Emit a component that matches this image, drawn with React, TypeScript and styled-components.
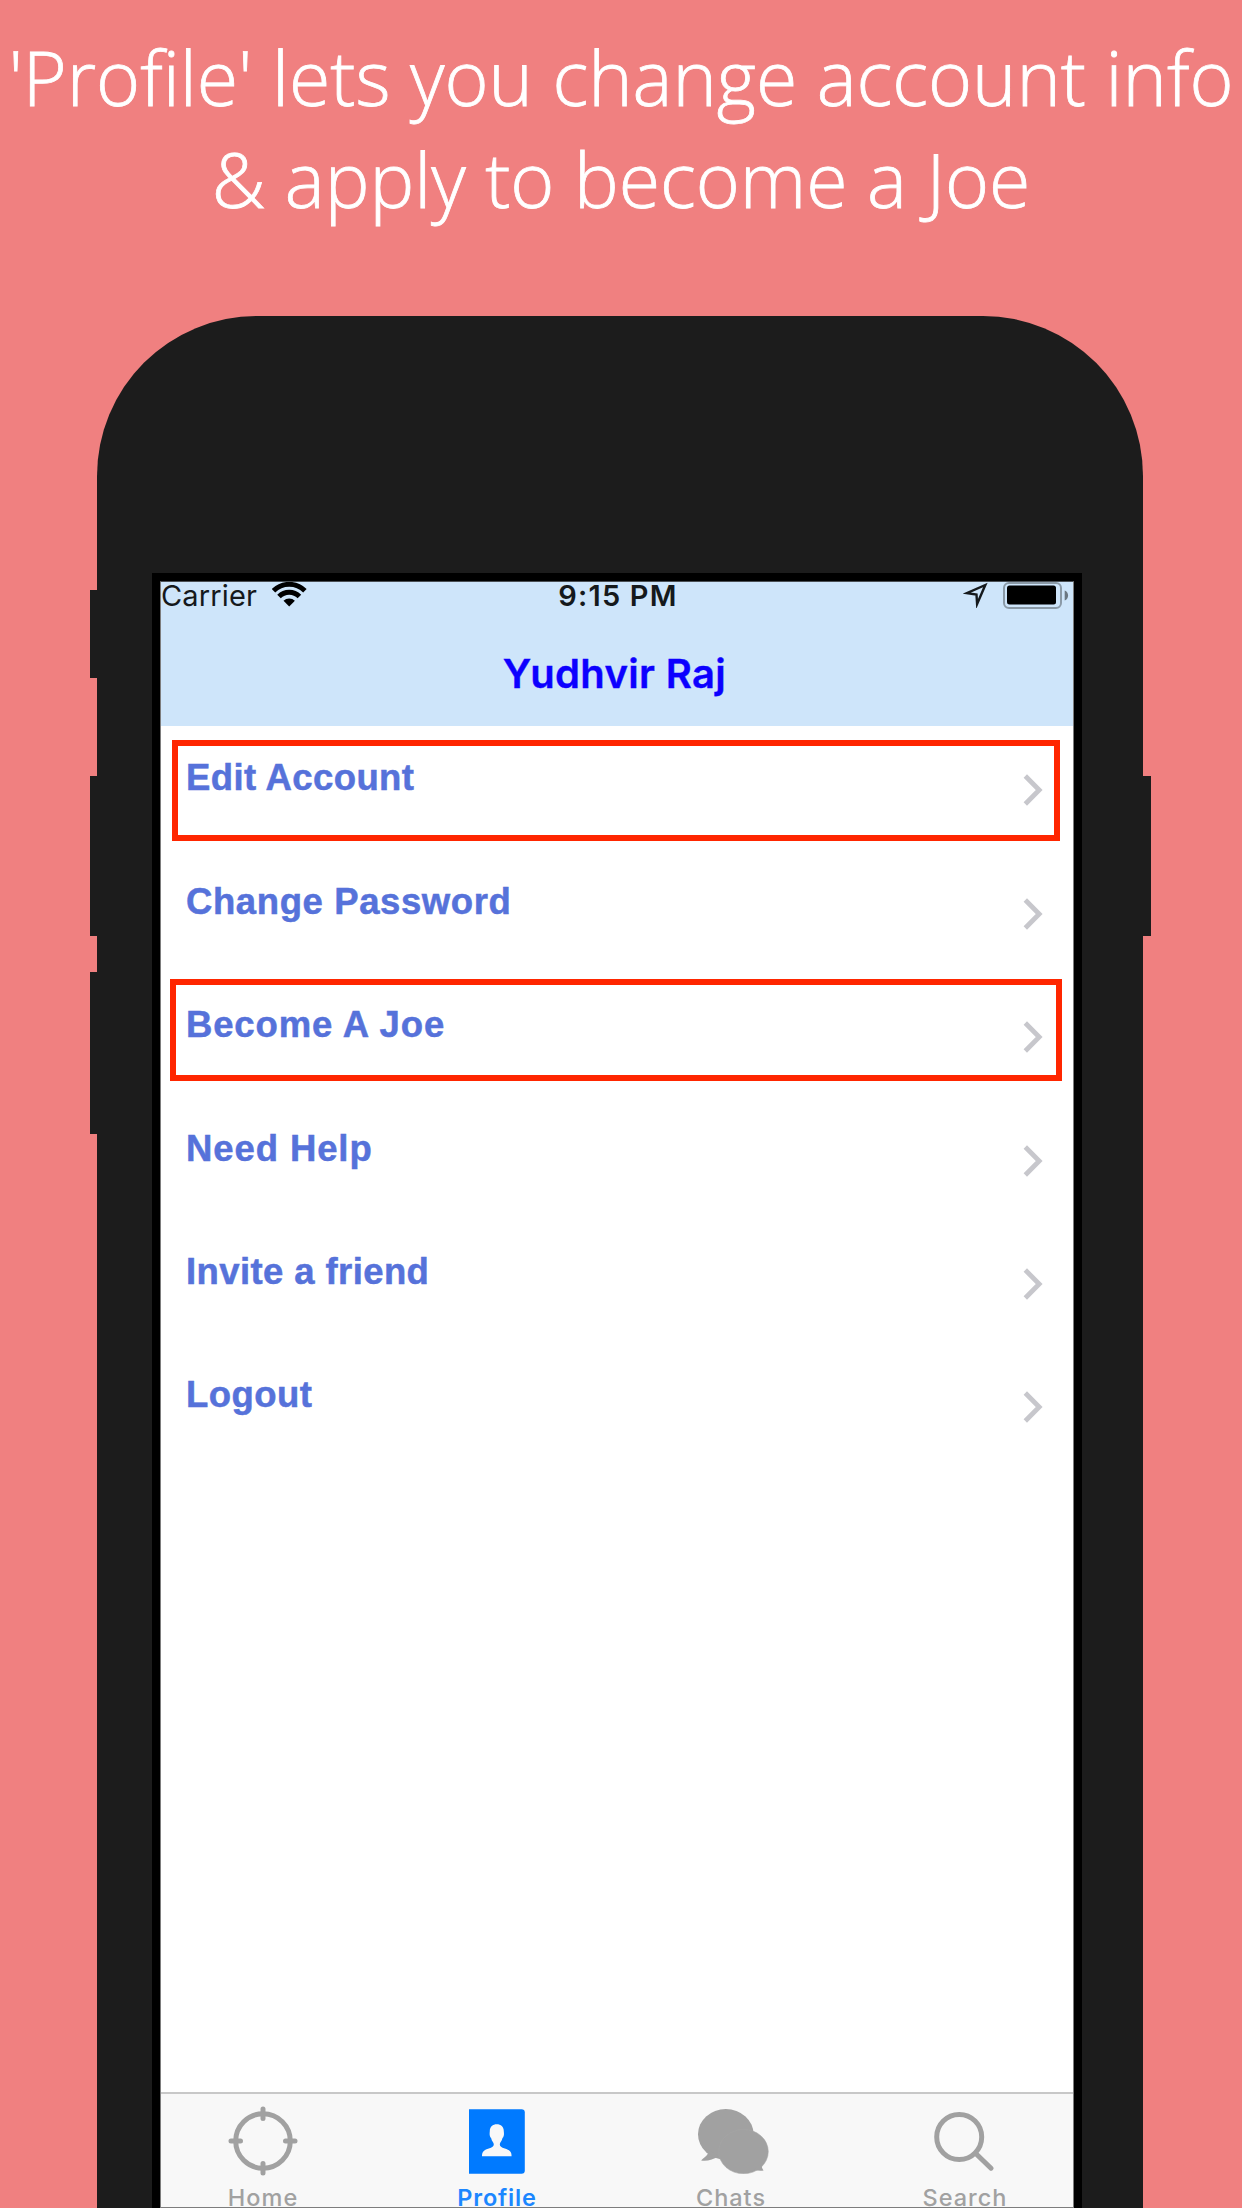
import React from "react";
import styled, { createGlobalStyle } from "styled-components";

const GlobalStyle = createGlobalStyle`
  * { box-sizing: border-box; }
  body {
    margin: 0;
    background: #f08080;
    font-family: Inter, "Liberation Sans", sans-serif;
  }
`;

const Page = styled.main`
  width: 1242px;
  height: 2208px;
  overflow: hidden;
  display: flex;
  flex-direction: column;
  background: #f08080;
`;

const Headline = styled.h1`
  margin: 0;
  padding-top: 26px;
  height: 316px;
  flex: none;
  color: #fff;
  font: 300 75.2px/102px "Open Sans", sans-serif;
  -webkit-text-stroke: 0.8px #fff;
  text-align: center;
  white-space: nowrap;
`;

const Phone = styled.section`
  position: relative;
  flex: 1;
  width: 1046px;
  margin-left: 97px;
  padding: 257px 61px 0 55px;
  display: flex;
  background: #1c1c1c;
  border-radius: 160px 160px 0 0;
`;

const SideButton = styled.span<{ $side: "left" | "right"; $top: number; $height: number }>`
  position: absolute;
  ${({ $side }) => ($side === "left" ? "left: -7px;" : "right: -8px;")}
  top: ${({ $top }) => $top}px;
  width: 12px;
  height: ${({ $height }) => $height}px;
  background: #1c1c1c;
`;

const Bezel = styled.div`
  flex: 1;
  display: flex;
  padding: 8px 8px 0;
  background: #000;
`;

const Screen = styled.div`
  flex: 1;
  display: flex;
  flex-direction: column;
  overflow: hidden;
  border: 1px solid #7d7d7d;
  border-top-color: #4a4f54;
  background: #fff;
`;

const TopArea = styled.header`
  flex: none;
  height: 144px;
  background: #cee5fa;
`;

const StatusBar = styled.div`
  height: 26px;
  display: grid;
  grid-template-columns: 1fr auto 1fr;
  color: #15191c;
  font-size: 29px;
  line-height: 28px;
  white-space: nowrap;
`;

const Carrier = styled.div`
  display: flex;
  gap: 15px;
  letter-spacing: 0.15px;
`;

const Clock = styled.time`
  padding-left: 2px;
  font-weight: 600;
  letter-spacing: 1.2px;
`;

const Indicators = styled.div`
  display: flex;
  justify-content: flex-end;
  gap: 15px;
  padding-right: 4px;
`;

const ScreenTitle = styled.h2`
  margin: 0;
  padding: 13px 5px 0 0;
  color: #0c00ff;
  font-size: 40px;
  font-weight: 600;
  line-height: 105px;
  letter-spacing: 0.35px;
  -webkit-text-stroke: 0.4px #0c00ff;
  text-align: center;
`;

const Menu = styled.ul`
  flex: 1;
  margin: 0;
  padding: 2.8px 0 0;
  list-style: none;
`;

const MenuRow = styled.li`
  position: relative;
  height: 123.36px;
  padding: 0 30.5px 0 25px;
  display: flex;
  align-items: center;
  justify-content: space-between;
`;

const MenuLabel = styled.span<{ $tracking: number }>`
  padding-bottom: 24px;
  color: #5672da;
  font: bold 36.5px/42px "Liberation Sans", Arial, sans-serif;
  letter-spacing: ${({ $tracking }) => $tracking}px;
  -webkit-text-stroke: 0.5px #5672da;
`;

const Highlight = styled.span<{ $top: number; $left: number; $right: number; $height: number }>`
  position: absolute;
  top: ${({ $top }) => $top}px;
  left: ${({ $left }) => $left}px;
  right: ${({ $right }) => $right}px;
  height: ${({ $height }) => $height}px;
  border: 6px solid #ff2600;
`;

const TabBar = styled.nav`
  flex: none;
  height: 115px;
  padding: 12px 48px 0 42px;
  display: flex;
  justify-content: space-between;
  border-top: 2px solid #c8c8c8;
  background: #f8f8f8;
`;

const Tab = styled.div<{ $active?: boolean }>`
  width: 120px;
  flex: none;
  display: flex;
  flex-direction: column;
  align-items: center;
  color: ${({ $active }) => ($active ? "#007aff" : "#a1a1a1")};
`;

const TabIcon = styled.div<{ $shift?: number }>`
  flex: none;
  height: 70px;
  display: flex;
  align-items: center;
  margin-left: ${({ $shift = 0 }) => $shift}px;
`;

const TabLabel = styled.span<{ $active?: boolean }>`
  margin-top: 10px;
  font-size: 23.5px;
  font-weight: ${({ $active }) => ($active ? 600 : 500)};
  line-height: 24px;
  letter-spacing: ${({ $active }) => ($active ? 0.8 : 1)}px;
  color: ${({ $active }) => ($active ? "#1c87ff" : "#a1a1a1")};
`;

const WifiIcon = () => (
  <svg width="35" height="25" viewBox="0 0 35 25" fill="none" stroke="#000">
    <path d="M1.5 8.8a22.2 22.2 0 0 1 31.4 0" strokeWidth="4.9" />
    <path d="M7 14.4a14.4 14.4 0 0 1 20.4 0" strokeWidth="5" />
    <path d="M11.5 18.8a8.1 8.1 0 0 1 11.4 0L17.2 24.6z" fill="#000" stroke="none" />
  </svg>
);

const LocationIcon = () => (
  <svg width="25" height="26" viewBox="0 0 25 26" fill="none">
    <path
      d="M22.3 3 3.8 11.2l9.7 1.4.6 9.4z"
      stroke="#15191c"
      strokeWidth="2.4"
      strokeMiterlimit="5"
    />
  </svg>
);

const BatteryIcon = () => (
  <svg width="66" height="27" viewBox="0 0 66 27">
    <rect x="1" y="1" width="57" height="25" rx="5" fill="none" stroke="#8b9aa7" strokeWidth="2" />
    <rect x="4" y="3.6" width="49" height="19" rx="2.5" fill="#000" />
    <path d="M61.7 8.5c4.5 1.5 4.5 8.5 0 10z" fill="#6b7782" />
  </svg>
);

const Chevron = () => (
  <svg width="20" height="34" viewBox="0 0 20 34" fill="none">
    <path d="M2.3 3 16.2 17 2.3 31" stroke="#c7c7cc" strokeWidth="4.8" />
  </svg>
);

const HomeIcon = () => (
  <svg width="70" height="70" viewBox="0 0 70 70" fill="none" stroke="currentColor" strokeWidth="5">
    <circle cx="35" cy="35" r="27.3" />
    <path d="M35 3v9.5M35 57.5V67M3 35h9.5M57.5 35H67" strokeLinecap="round" />
  </svg>
);

const ProfileIcon = () => (
  <svg width="56" height="65" viewBox="0 0 56 65">
    <path d="M0 .2h52.5q3.3 0 3.3 3.3v58q0 3.3-3.3 3.3H0z" fill="currentColor" />
    <path
      d="M13 47.2c0-4.8 2.5-6.2 6.8-7.6 3.4-1.1 5-2.2 5-4.3 0-1.6-2-3-2.7-6.3-1.7-1.6-1.6-4.2-1.3-6.8 0-4.3 3-6.9 7-6.9s7 2.6 7 6.9c.3 2.6.4 5.2-1.3 6.8-.7 3.3-2.7 4.7-2.7 6.3 0 2.1 1.6 3.2 5 4.3 4.3 1.4 6.8 2.8 6.8 7.6z"
      fill="#f8f8f8"
    />
  </svg>
);

const ChatsIcon = () => (
  <svg width="71" height="65" viewBox="0 0 71 65" fill="currentColor">
    <ellipse cx="27.8" cy="25.3" rx="27.8" ry="25.3" />
    <path d="M8 39.5c3 2.5 2.5 4.5.8 6.8-1.5 2-3.8 3-5.7 5.2 6 1.2 11.5-1 18.500-4.500z" />
    <ellipse cx="45.5" cy="42.6" rx="24.8" ry="22.2" stroke="#a6a6a6" strokeWidth=".5" />
    <path d="M64 56c-.6 2.5.2 3.3 1.6 5.5-3 .5-6 .3-9.500-.8z" />
  </svg>
);

const SearchIcon = () => (
  <svg width="60" height="59" viewBox="0 0 60 59" fill="none" stroke="currentColor" strokeWidth="5">
    <circle cx="25.2" cy="25" r="22.5" />
    <path d="M41.5 41.2 57 56.2" strokeLinecap="round" />
  </svg>
);

type Mark = { top: number; left: number; right: number; height: number };

const menu: { label: string; tracking: number; mark?: Mark }[] = [
  { label: "Edit Account", tracking: 0.38, mark: { top: 11.2, left: 11, right: 13, height: 101 } },
  { label: "Change Password", tracking: 0.6 },
  { label: "Become A Joe", tracking: 0.85, mark: { top: 3.5, left: 9, right: 11, height: 102 } },
  { label: "Need Help", tracking: 0.9 },
  { label: "Invite a friend", tracking: 0.4 },
  { label: "Logout", tracking: 0.45 },
];

const tabs = [
  { label: "Home", Icon: HomeIcon },
  { label: "Profile", Icon: ProfileIcon, active: true },
  { label: "Chats", Icon: ChatsIcon, shift: 5 },
  { label: "Search", Icon: SearchIcon, shift: -3 },
];

export default function App() {
  return (
    <>
      <GlobalStyle />
      <Page>
        <Headline>
          'Profile' lets you change account info
          <br />
          &amp; apply to become a Joe
        </Headline>
        <Phone>
          <SideButton $side="left" $top={274} $height={88} />
          <SideButton $side="left" $top={460} $height={160} />
          <SideButton $side="left" $top={656} $height={162} />
          <SideButton $side="right" $top={460} $height={160} />
          <Bezel>
            <Screen>
              <TopArea>
                <StatusBar>
                  <Carrier>
                    Carrier
                    <WifiIcon />
                  </Carrier>
                  <Clock>9:15 PM</Clock>
                  <Indicators>
                    <LocationIcon />
                    <BatteryIcon />
                  </Indicators>
                </StatusBar>
                <ScreenTitle>Yudhvir Raj</ScreenTitle>
              </TopArea>
              <Menu>
                {menu.map(({ label, tracking, mark }) => (
                  <MenuRow key={label}>
                    <MenuLabel $tracking={tracking}>{label}</MenuLabel>
                    <Chevron />
                    {mark && (
                      <Highlight
                        $top={mark.top}
                        $left={mark.left}
                        $right={mark.right}
                        $height={mark.height}
                      />
                    )}
                  </MenuRow>
                ))}
              </Menu>
              <TabBar>
                {tabs.map(({ label, Icon, active, shift }) => (
                  <Tab key={label} $active={active}>
                    <TabIcon $shift={shift}>
                      <Icon />
                    </TabIcon>
                    <TabLabel $active={active}>{label}</TabLabel>
                  </Tab>
                ))}
              </TabBar>
            </Screen>
          </Bezel>
        </Phone>
      </Page>
    </>
  );
}
